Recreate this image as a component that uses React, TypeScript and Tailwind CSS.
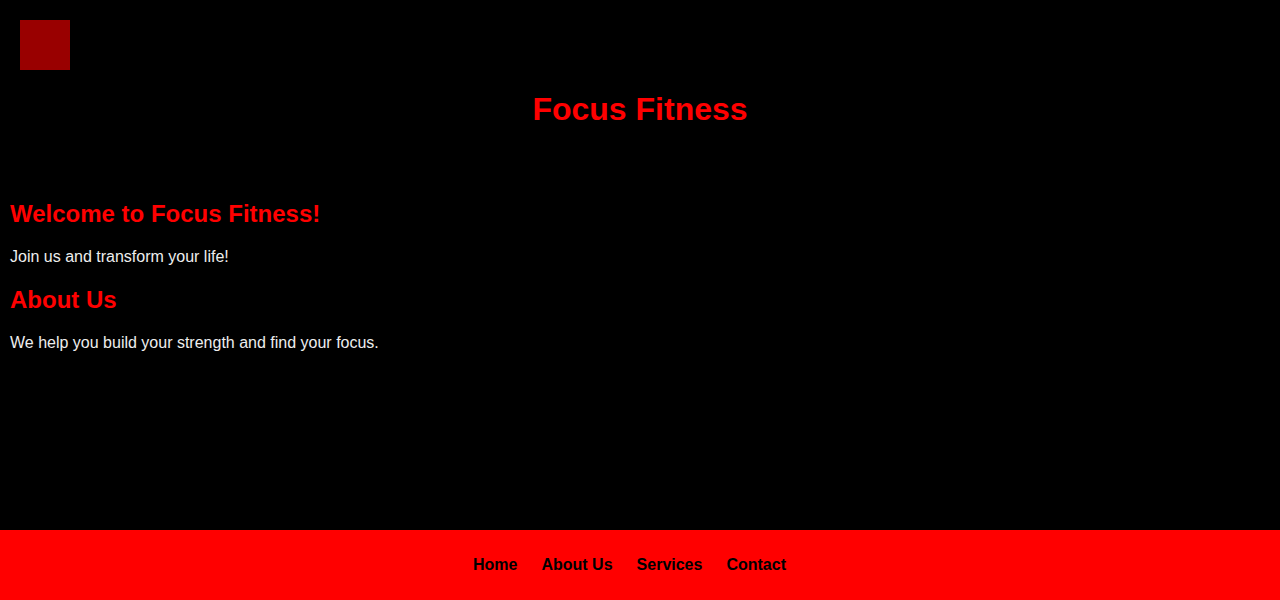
import React from 'react';

const links = ['Home', 'About Us', 'Services', 'Contact'];

export default function App() {
  return (
    <div className="min-h-screen flex flex-col bg-black font-['Liberation_Sans',Arial,sans-serif]">
      {/* Header */}
      <header className="p-5">
        <div className="w-[50px] h-[50px] bg-[#990000]" />
        <h1 className="my-[21.44px] text-center text-[32px] leading-[normal] font-bold text-[#ff0000]">
          Focus Fitness
        </h1>
      </header>

      {/* Main */}
      <main className="flex-1 p-[10px]">
        <section>
          <h2 className="my-[19.92px] text-2xl leading-[normal] font-bold text-[#ff0000]">
            Welcome to Focus Fitness!
          </h2>
          <p className="my-4 text-base leading-[normal] text-[#eeeeee]">Join us and transform your life!</p>
        </section>
        <section>
          <h2 className="my-[19.92px] text-2xl leading-[normal] font-bold text-[#ff0000]">About Us</h2>
          <p className="my-4 text-base leading-[normal] text-[#eeeeee]">
            We help you build your strength and find your focus.
          </p>
        </section>
      </main>

      {/* Footer */}
      <footer className="h-[70px] bg-[#ff0000] flex items-center justify-center">
        <nav className="flex gap-6 pr-[21px]">
          {links.map((l) => (
            <a key={l} href="#" className="text-base leading-[normal] font-bold text-black">
              {l}
            </a>
          ))}
        </nav>
      </footer>
    </div>
  );
}
